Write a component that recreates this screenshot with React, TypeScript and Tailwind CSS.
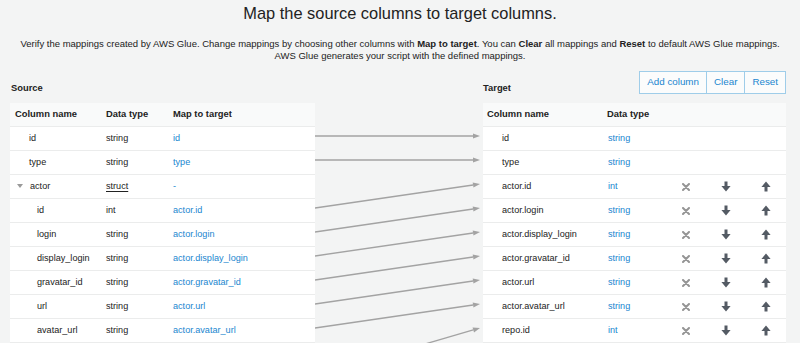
type SourceRow = { name: string; type: string; target: string; level: 0 | 1; struct?: boolean };
type TargetRow = { name: string; type: string; editable: boolean };

const sourceRows: SourceRow[] = [
  { name: "id", type: "string", target: "id", level: 0 },
  { name: "type", type: "string", target: "type", level: 0 },
  { name: "actor", type: "struct", target: "-", level: 0, struct: true },
  { name: "id", type: "int", target: "actor.id", level: 1 },
  { name: "login", type: "string", target: "actor.login", level: 1 },
  { name: "display_login", type: "string", target: "actor.display_login", level: 1 },
  { name: "gravatar_id", type: "string", target: "actor.gravatar_id", level: 1 },
  { name: "url", type: "string", target: "actor.url", level: 1 },
  { name: "avatar_url", type: "string", target: "actor.avatar_url", level: 1 },
];

const targetRows: TargetRow[] = [
  { name: "id", type: "string", editable: false },
  { name: "type", type: "string", editable: false },
  { name: "actor.id", type: "int", editable: true },
  { name: "actor.login", type: "string", editable: true },
  { name: "actor.display_login", type: "string", editable: true },
  { name: "actor.gravatar_id", type: "string", editable: true },
  { name: "actor.url", type: "string", editable: true },
  { name: "actor.avatar_url", type: "string", editable: true },
  { name: "repo.id", type: "int", editable: true },
];

// source row index -> target row index (10 = repo.id, below the fold)
const links: [number, number][] = [
  [0, 0],
  [1, 1],
  [3, 2],
  [4, 3],
  [5, 4],
  [6, 5],
  [7, 6],
  [8, 7],
  [10, 8],
];

const rowY = (i: number) => 33 + 24 * i;

const Caret = () => (
  <svg width="6" height="4" viewBox="0 0 6 4" className="mr-[7px] shrink-0">
    <path d="M0 0 L6 0 L3 4 Z" fill="#9a9a9a" />
  </svg>
);

const RemoveIcon = () => (
  <svg width="8" height="8" viewBox="0 0 8 8">
    <path d="M1 1 L7 7 M7 1 L1 7" stroke="#959595" strokeWidth="2" strokeLinecap="round" />
  </svg>
);

const DownIcon = () => (
  <svg width="10" height="11" viewBox="0 0 10 11">
    <path d="M3.5 0.5 H6.5 V5 H9.6 L5 10.5 L0.4 5 H3.5 Z" fill="#545b64" strokeLinejoin="round" />
  </svg>
);

const UpIcon = () => (
  <svg width="10" height="11" viewBox="0 0 10 11">
    <path d="M3.5 10.5 H6.5 V6 H9.6 L5 0.5 L0.4 6 H3.5 Z" fill="#545b64" strokeLinejoin="round" />
  </svg>
);

const Arrows = () => (
  <svg width="168" height="320" className="block">
    {links.map(([s, t]) => {
      const y1 = rowY(s);
      const y2 = rowY(t);
      const x2 = 165;
      const ang = Math.atan2(y2 - y1, x2);
      const len = 7;
      const half = 2.6;
      const bx = x2 - len * Math.cos(ang);
      const by = y2 - len * Math.sin(ang);
      const px = -Math.sin(ang) * half;
      const py = Math.cos(ang) * half;
      return (
        <g key={`${s}-${t}`}>
          <line x1={0} y1={y1} x2={bx} y2={by} stroke="#a3a3a3" strokeWidth={1.3} />
          <path d={`M${x2} ${y2} L${bx + px} ${by + py} L${bx - px} ${by - py} Z`} fill="#a3a3a3" />
        </g>
      );
    })}
  </svg>
);

export default function App() {
  return (
    <div className="h-[343px] w-[800px] overflow-hidden bg-[#f3f4f4] text-[#222] font-['Liberation_Sans',Arial,sans-serif]">
      <h1 className="pt-[3px] text-center text-[16.4px] leading-[20px] text-[#222]">
        Map the source columns to target columns.
      </h1>
      <p className="mt-[15px] text-center text-[9.5px] leading-[12px] text-[#222]">
        Verify the mappings created by AWS Glue. Change mappings by choosing other columns with{" "}
        <b>Map to target</b>. You can <b>Clear</b> all mappings and <b>Reset</b> to default AWS Glue mappings.
        <br />
        AWS Glue generates your script with the defined mappings.
      </p>

      <div className="mt-[9px] flex pl-[10px]">
        <div className="flex h-[23px] w-[305px] items-end">
          <span className="pl-px text-[9.4px] font-bold leading-[12px]">Source</span>
        </div>
        <div className="w-[168px]" />
        <div className="flex h-[23px] w-[303px] items-end justify-between">
          <span className="text-[9.4px] font-bold leading-[12px]">Target</span>
          <div className="flex h-[23px] self-start">
            {["Add column", "Clear", "Reset"].map((b, i) => (
              <button
                key={b}
                className={`h-[23px] border border-[#9fcde9] bg-[#fbfcfc] px-[7px] text-[9.8px] text-[#1a86cf] ${i > 0 ? "-ml-px" : ""}`}
              >
                {b}
              </button>
            ))}
          </div>
        </div>
      </div>

      <div className="mt-[9px] flex pl-[10px] text-[9.1px]">
        {/* source table */}
        <div className="w-[305px] shrink-0">
          <div className="grid h-[24px] grid-cols-[91px_67px_1fr] items-center border-b border-[#ebecec] bg-[#f9fafa] pl-[5px] text-[9.4px] font-bold">
            <span>Column name</span>
            <span>Data type</span>
            <span>Map to target</span>
          </div>
          {sourceRows.map((r, i) => (
            <div
              key={i}
              className="grid h-[24px] grid-cols-[91px_67px_1fr] items-center border-b border-[#ebecec] bg-white pl-[5px]"
            >
              <span className={`flex items-center ${r.struct ? "pl-[2px]" : r.level === 0 ? "pl-[14px]" : "pl-[22px]"}`}>
                {r.struct && <Caret />}
                {r.name}
              </span>
              <span className={r.struct ? "underline underline-offset-2" : ""}>{r.type}</span>
              <span className="text-[#1a86cf]">{r.target}</span>
            </div>
          ))}
          <div className="h-[24px] bg-white" />
        </div>

        {/* mapping arrows */}
        <div className="w-[168px] shrink-0">
          <Arrows />
        </div>

        {/* target table */}
        <div className="w-[303px] shrink-0">
          <div className="grid h-[24px] grid-cols-[120px_59px_40px_40px_40px] items-center border-b border-[#ebecec] bg-[#f9fafa] pl-[4px] text-[9.4px] font-bold">
            <span>Column name</span>
            <span>Data type</span>
          </div>
          {targetRows.map((r, i) => (
            <div
              key={i}
              className="grid h-[24px] grid-cols-[120px_59px_40px_40px_40px] items-center border-b border-[#ebecec] bg-white pl-[4px]"
            >
              <span className="pl-[15px]">{r.name}</span>
              <span className="pl-px text-[#1a86cf]">{r.type}</span>
              {r.editable && (
                <>
                  <span className="flex justify-center">
                    <RemoveIcon />
                  </span>
                  <span className="flex justify-center">
                    <DownIcon />
                  </span>
                  <span className="flex justify-center">
                    <UpIcon />
                  </span>
                </>
              )}
            </div>
          ))}
        </div>
      </div>
    </div>
  );
}
